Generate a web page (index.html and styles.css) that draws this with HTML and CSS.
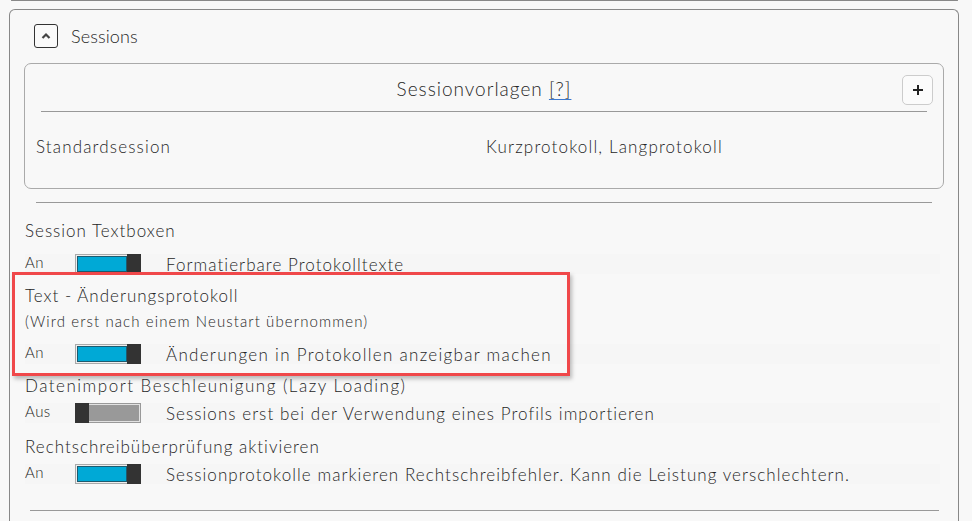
FILE: index.html
```html
<!DOCTYPE html>
<html lang="de">
<head>
<meta charset="utf-8">
<title>Sessions</title>
<link rel="stylesheet" href="styles.css">
</head>
<body>
<div class="prev"></div>
<section class="panel">
  <header class="panel-head">
    <button class="collapse" aria-label="Einklappen">
      <svg width="10" height="8" viewBox="0 0 10 8"><polyline points="1.5,6 5,2.5 8.5,6" fill="none" stroke="#444" stroke-width="2.2"/></svg>
    </button>
    <span class="panel-title">Sessions</span>
  </header>

  <div class="tpl-box">
    <div class="tpl-head">
      <span></span>
      <span class="tpl-title">Sessionvorlagen <span class="help">[?]</span></span>
      <button class="add" aria-label="Hinzufügen">
        <svg width="12" height="12" viewBox="0 0 12 12"><path d="M6 1v10M1 6h10" stroke="#222" stroke-width="2"/></svg>
      </button>
    </div>
    <div class="tpl-sep"></div>
    <div class="tpl-row">
      <span>Standardsession</span>
      <span>Kurzprotokoll, Langprotokoll</span>
    </div>
  </div>

  <div class="sep"></div>

  <div class="settings">
    <div class="setting s1">
      <div class="s-title">Session Textboxen</div>
      <div class="s-row">
        <span class="s-state">An</span>
        <span class="toggle on"><span class="track"><span class="fill"></span></span><span class="knob"></span></span>
        <span class="s-desc">Formatierbare Protokolltexte</span>
      </div>
    </div>

    <div class="setting s2 hl">
      <div class="s-title">Text - Änderungsprotokoll</div>
      <div class="s-note">(Wird erst nach einem Neustart übernommen)</div>
      <div class="s-row">
        <span class="s-state">An</span>
        <span class="toggle on"><span class="track"><span class="fill"></span></span><span class="knob"></span></span>
        <span class="s-desc loose">Änderungen in Protokollen anzeigbar machen</span>
      </div>
    </div>

    <div class="setting s3">
      <div class="s-title looser">Datenimport Beschleunigung (Lazy Loading)</div>
      <div class="s-row">
        <span class="s-state">Aus</span>
        <span class="toggle off"><span class="knob"></span><span class="track"><span class="fill"></span></span></span>
        <span class="s-desc">Sessions erst bei der Verwendung eines Profils importieren</span>
      </div>
    </div>

    <div class="setting s4">
      <div class="s-title">Rechtschreibüberprüfung aktivieren</div>
      <div class="s-row">
        <span class="s-state">An</span>
        <span class="toggle on"><span class="track"><span class="fill"></span></span><span class="knob"></span></span>
        <span class="s-desc">Sessionprotokolle markieren Rechtschreibfehler. Kann die Leistung verschlechtern.</span>
      </div>
    </div>
  </div>

  <div class="sep bottom"></div>
</section>
</body>
</html>
```

FILE: styles.css
```css
html, body {
  margin: 0;
  padding: 0;
  background: #f8f8f8;
}
body {
  font-family: "Lato", "Open Sans", sans-serif;
  font-weight: 300;
  color: #262626;
  width: 972px;
  height: 521px;
  overflow: hidden;
}

.prev {
  height: 0;
  margin: 0 14px 0 11px;
  border: 1px solid #888;
  border-top: 0;
  border-radius: 0 0 6px 6px;
}

.panel {
  margin: 8px 13px 0 9px;
  border: 1px solid #888;
  border-bottom: 0;
  border-radius: 6px 6px 0 0;
  padding: 14px 14px 0 14px;
  height: 520px;
}

.panel-head {
  display: flex;
  align-items: center;
  gap: 13px;
  padding-left: 10px;
  height: 24px;
}
.collapse {
  width: 24px;
  height: 24px;
  box-sizing: border-box;
  border: 1px solid #333;
  border-radius: 3px;
  background: #fafafa;
  padding: 0;
  display: flex;
  align-items: center;
  justify-content: center;
}
.panel-title {
  font-size: 18px;
  letter-spacing: 0.1px;
  margin-top: -1px;
}

.tpl-box {
  margin-top: 15px;
  border: 1px solid #aaa;
  border-radius: 7px;
  padding: 11px 10px 0 10px;
  box-sizing: border-box;
  height: 126px;
}
.tpl-head {
  display: grid;
  grid-template-columns: 1fr auto 1fr;
  align-items: center;
  height: 30px;
}
.tpl-title {
  font-size: 19px;
  letter-spacing: 1px;
  margin-top: -3px;
}
.help {
  text-decoration: underline;
  text-decoration-color: #3a78d0;
  text-underline-offset: 3px;
}
.add {
  justify-self: end;
  width: 31px;
  height: 30px;
  box-sizing: border-box;
  border: 1px solid #ccc;
  border-radius: 5px;
  background: #fbfbfb;
  display: flex;
  align-items: center;
  justify-content: center;
  padding: 0;
}
.tpl-sep {
  margin: 6px 6px 0 6px;
  border-top: 1px solid #999;
}
.tpl-row {
  display: grid;
  grid-template-columns: 1fr 1fr;
  padding: 23px 1px 0 1px;
  line-height: 24px;
  font-size: 17px;
  letter-spacing: 1.15px;
}
.tpl-row span:last-child {
  padding-left: 2px;
}

.sep {
  margin: 13px 12px 0 12px;
  border-top: 1px solid #999;
}
.sep.bottom {
  margin: 26px 5px 0 6px;
}

.settings {
  padding-left: 1px;
  margin-top: 18px;
}
.setting {
  position: relative;
}
.s-title {
  font-size: 17px;
  line-height: 20px;
  letter-spacing: 1px;
}
.s-title.looser {
  letter-spacing: 1.5px;
}
.s-note {
  font-size: 15px;
  line-height: 18px;
  margin-top: 6px;
  letter-spacing: 1.1px;
}
.s-row {
  display: flex;
  align-items: center;
  height: 20px;
  margin-right: 4px;
  background: #f6f6f6;
}
.s1 .s-row { margin-top: 13px; }
.s2 { margin-top: 12px; }
.s2 .s-row { margin-top: 14px; }
.s3 { margin-top: 12px; }
.s3 .s-row { margin-top: 7px; }
.s4 { margin-top: 14px; }
.s4 .s-row { margin-top: 7px; }

.s-state {
  width: 50px;
  font-size: 15px;
  line-height: 16px;
  letter-spacing: 0.5px;
  align-self: flex-start;
}
.s-desc {
  margin-left: 25px;
  font-size: 17px;
  letter-spacing: 1.05px;
}
.s-desc.loose {
  letter-spacing: 1.3px;
}

.toggle {
  display: flex;
  width: 66px;
  height: 20px;
}
.knob {
  width: 14px;
  height: 20px;
  background: #333;
}
.track {
  flex: 1;
  box-sizing: border-box;
  height: 20px;
  display: flex;
}
.fill {
  flex: 1;
  box-sizing: border-box;
}
.toggle.on .track {
  border: 1px solid #aaa;
  border-right: 0;
  padding: 1px 0 1px 1px;
  background: #eee;
}
.toggle.on .fill {
  border: 1px solid #1e5a6e;
  background: #00a9d6;
}
.toggle.off .track {
  border: 1px solid #999;
  border-left: 0;
  background: #999;
}
.toggle.off .fill {
  border: 1px solid #e2e2e2;
  border-left: 0;
  background: #999;
}

.setting.hl::after {
  content: "";
  position: absolute;
  left: -13px;
  top: -14px;
  width: 558px;
  height: 104px;
  box-sizing: border-box;
  border: 3px solid #f0484a;
  box-shadow: 2px 3px 4px rgba(0, 0, 0, 0.25);
  pointer-events: none;
}
```
